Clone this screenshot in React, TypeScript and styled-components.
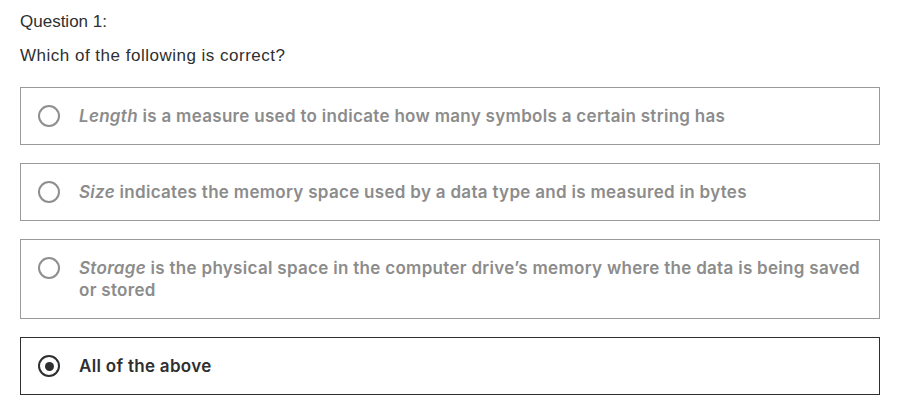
import React from "react";
import styled, { createGlobalStyle } from "styled-components";

const Global = createGlobalStyle`
  html, body { margin: 0; padding: 0; background: #fff; }
  body { font-family: "Liberation Sans", Arial, sans-serif; }
`;

const Page = styled.div`
  padding: 10px 19px 0 20px;
  width: 860px;
`;

const Label = styled.div`
  font-family: "Liberation Sans", Arial, sans-serif;
  font-size: 17px;
  line-height: 24px;
  color: #2d2f31;
  margin-bottom: 10px;
`;

const Question = styled.div`
  font-family: "Liberation Sans", Arial, sans-serif;
  font-size: 17px;
  line-height: 24px;
  letter-spacing: 0.5px;
  color: #2d2f31;
  margin-bottom: 19px;
`;

const List = styled.div`
  display: flex;
  flex-direction: column;
  gap: 18px;
`;

const Option = styled.label<{ $selected?: boolean }>`
  display: flex;
  align-items: flex-start;
  gap: 19px;
  padding: 17px 10px 17px 17px;
  border: 1px solid ${(p) => (p.$selected ? "#2d2f31" : "#9a9a9a")};
  cursor: pointer;
`;

const Radio = styled.span<{ $selected?: boolean }>`
  flex: 0 0 auto;
  width: 22px;
  height: 22px;
  box-sizing: border-box;
  border-radius: 50%;
  border: ${(p) => (p.$selected ? "2.5px solid #2d2f31" : "2px solid #8f8f8f")};
  display: flex;
  align-items: center;
  justify-content: center;
  &::after {
    content: "";
    display: ${(p) => (p.$selected ? "block" : "none")};
    width: 9px;
    height: 9px;
    border-radius: 50%;
    background: #2d2f31;
  }
`;

const Text = styled.span<{ $selected?: boolean }>`
  font-family: Inter, "Liberation Sans", sans-serif;
  font-weight: 600;
  font-size: 17px;
  line-height: 22px;
  letter-spacing: 0.3px;
  color: ${(p) => (p.$selected ? "#2d2f31" : "#8c8c8c")};
  em { font-style: italic; }
`;

const options: { term?: string; rest: string; selected?: boolean }[] = [
  { term: "Length", rest: " is a measure used to indicate how many symbols a certain string has" },
  { term: "Size", rest: " indicates the memory space used by a data type and is measured in bytes" },
  { term: "Storage", rest: " is the physical space in the computer drive\u2019s memory where the data is being saved or stored" },
  { rest: "All of the above", selected: true },
];

export default function App() {
  return (
    <>
      <Global />
      <Page>
        <Label>Question 1:</Label>
        <Question>Which of the following is correct?</Question>
        <List>
          {options.map((o, i) => (
            <Option key={i} $selected={o.selected}>
              <Radio $selected={o.selected} />
              <Text $selected={o.selected}>
                {o.term && <em>{o.term}</em>}
                {o.rest}
              </Text>
            </Option>
          ))}
        </List>
      </Page>
    </>
  );
}
